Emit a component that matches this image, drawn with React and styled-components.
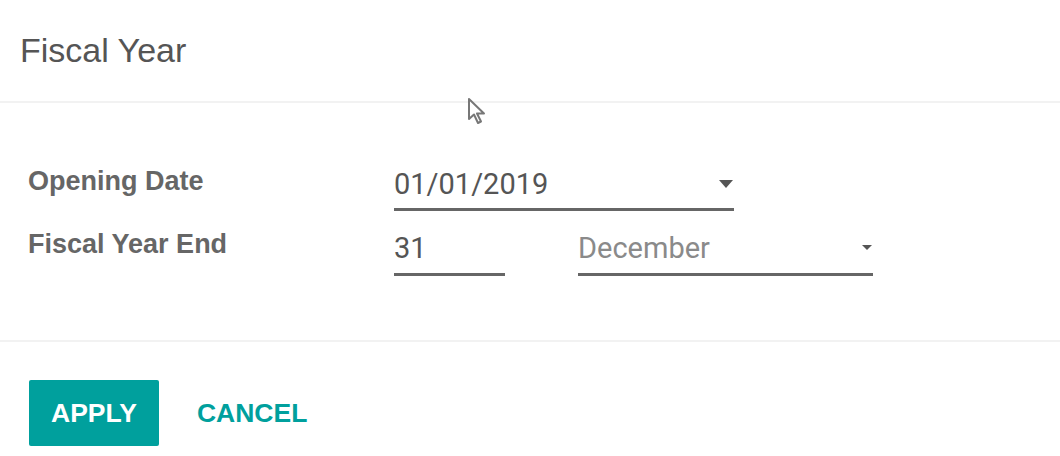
import React from "react";
import styled, { createGlobalStyle } from "styled-components";

const GlobalStyle = createGlobalStyle`
  html, body {
    margin: 0;
    padding: 0;
    background: #fff;
  }
  body {
    font-family: "Liberation Sans", Arial, sans-serif;
    color: #555;
  }
`;

const Dialog = styled.div`
  position: relative;
  width: 1060px;
  height: 456px;
  background: #fff;
  overflow: hidden;
`;

const Header = styled.header`
  height: 103px;
  box-sizing: border-box;
  padding: 31px 20px 0;
  border-bottom: 2px solid #f2f2f2;
`;

const Title = styled.h4`
  margin: 0;
  font-size: 34px;
  line-height: 38px;
  font-weight: 400;
  color: #555;
`;

const Body = styled.div`
  height: 239px;
  box-sizing: border-box;
  padding: 56px 28px 0;
  border-bottom: 2px solid #f2f2f2;
`;

const Row = styled.div`
  display: grid;
  grid-template-columns: 366px auto;
  align-items: start;
  height: 63px;
`;

const Label = styled.label`
  margin-top: 6px;
  font-size: 27px;
  line-height: 32px;
  font-weight: 700;
  color: #666;
`;

const Fields = styled.div`
  display: flex;
  align-items: start;
  gap: 73px;
`;

const Field = styled.div`
  width: ${(p) => p.$w}px;
  height: ${(p) => p.$h}px;
  box-sizing: border-box;
  border-bottom: 3px solid #666;
  display: flex;
  align-items: center;
  justify-content: space-between;
  padding-right: 1px;
  font-family: Roboto, "Liberation Sans", Arial, sans-serif;
  font-size: 29px;
  color: ${(p) => (p.$muted ? "#8a8a8a" : "#555")};
`;

const Caret = styled.span`
  width: 0;
  height: 0;
  border-left: ${(p) => (p.$small ? 5 : 7)}px solid transparent;
  border-right: ${(p) => (p.$small ? 5 : 7)}px solid transparent;
  border-top: ${(p) => (p.$small ? 5 : 8)}px solid #555;
`;

const Footer = styled.footer`
  display: flex;
  align-items: center;
  gap: 38px;
  padding: 38px 29px 0;
`;

const Button = styled.button`
  height: 66px;
  padding: 0 ${(p) => (p.$primary ? 22 : 0)}px;
  border: none;
  border-radius: 2px;
  background: ${(p) => (p.$primary ? "#00a09d" : "transparent")};
  color: ${(p) => (p.$primary ? "#fff" : "#00a09d")};
  font-family: "Liberation Sans", Arial, sans-serif;
  font-size: 26.5px;
  font-weight: 700;
  text-transform: uppercase;
  cursor: pointer;
`;

const Pointer = styled.svg`
  position: absolute;
  left: 467px;
  top: 97px;
`;

export default function App() {
  return (
    <Dialog>
      <GlobalStyle />
      <Header>
        <Title>Fiscal Year</Title>
      </Header>
      <Body>
        <Row>
          <Label>Opening Date</Label>
          <Fields>
            <Field $w={340} $h={52}>
              <span>01/01/2019</span>
              <Caret />
            </Field>
          </Fields>
        </Row>
        <Row>
          <Label>Fiscal Year End</Label>
          <Fields>
            <Field $w={111} $h={54}>
              <span>31</span>
            </Field>
            <Field $w={295} $h={54} $muted>
              <span>December</span>
              <Caret $small />
            </Field>
          </Fields>
        </Row>
      </Body>
      <Footer>
        <Button $primary>Apply</Button>
        <Button>Cancel</Button>
      </Footer>
      <Pointer width="22" height="30" viewBox="0 0 22 30">
        <path
          d="M2 2 L2 22 L7 17.5 L11 26 L14 24.5 L10 16.5 L17 16.5 Z"
          fill="#fff"
          stroke="#777"
          strokeWidth="2"
          strokeLinejoin="round"
        />
      </Pointer>
    </Dialog>
  );
}
